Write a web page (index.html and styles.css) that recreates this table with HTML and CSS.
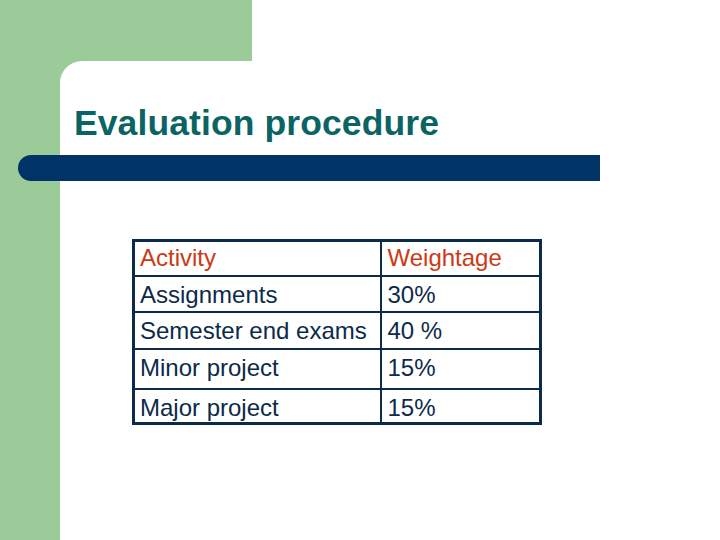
FILE: index.html
```html
<!DOCTYPE html>
<html lang="en">
<head>
    <meta charset="UTF-8">
    <meta name="viewport" content="width=device-width, initial-scale=1.0">
    <title>Evaluation procedure</title>
    <link rel="stylesheet" href="styles.css">
</head>
<body>

    <div class="slide">
        <div class="topBand"></div>
        <div class="main">
            <div class="panel">
                <h1 class="title">Evaluation procedure</h1>
                <div class="bar"></div>

                <table class="marks">
                    <tr class="head">
                        <td class="colA">Activity</td>
                        <td>Weightage</td>
                    </tr>
                    <tr class="r1">
                        <td class="colA">Assignments</td>
                        <td>30%</td>
                    </tr>
                    <tr class="r2">
                        <td class="colA">Semester end exams</td>
                        <td>40 %</td>
                    </tr>
                    <tr class="r3">
                        <td class="colA">Minor project</td>
                        <td>15%</td>
                    </tr>
                    <tr class="r4">
                        <td class="colA">Major project</td>
                        <td>15%</td>
                    </tr>
                </table>
            </div>
        </div>
    </div>

</body>
</html>
```

FILE: styles.css
```css
*{ box-sizing: border-box; }
html, body{ margin: 0; padding: 0; background-color: #fff; }

.slide{
    width: 720px;
    height: 540px;
    display: flex;
    flex-direction: column;
    overflow: hidden;
}
.topBand{
    width: 252px;
    height: 61px;
    background: #9ccb9a;
}
.main{
    flex: 1;
    display: flex;
    background: linear-gradient(90deg, #9ccb9a 0 252px, #fff 252px);
}
.panel{
    flex: 1;
    margin-left: 60px;
    background: #fff;
    border-top-left-radius: 22px;
    padding: 42px 0 0 14px;
}
.title{
    margin: 0;
    font-family: "Liberation Sans", Arial, sans-serif;
    font-weight: bold;
    font-size: 35.5px;
    letter-spacing: 0.1px;
    line-height: 40px;
    color: #0b6464;
}
.bar{
    width: 582px;
    height: 26px;
    margin: 12px 0 0 -56px;
    background: #003366;
    border-radius: 13px 0 0 13px;
}
.marks{
    margin: 58px 0 0 58px;
    border-collapse: collapse;
    border: 3px solid #0c2b4b;
    font-family: "Liberation Sans", Arial, sans-serif;
    font-size: 24px;
    color: #0c2a4a;
}
.marks td{
    border: 2px solid #0c2b4b;
    padding: 4px 6px 0 6px;
    line-height: 27px;
    vertical-align: top;
    width: 160px;
}
.marks td.colA{
    width: 247px;
    padding-left: 5px;
}
.marks .head td{
    color: #cc3a14;
    padding-top: 2px;
}
.head{ height: 35px; }
.r1{ height: 36px; }
.r2{ height: 37px; }
.r3{ height: 40px; }
.r4{ height: 35px; }
```
